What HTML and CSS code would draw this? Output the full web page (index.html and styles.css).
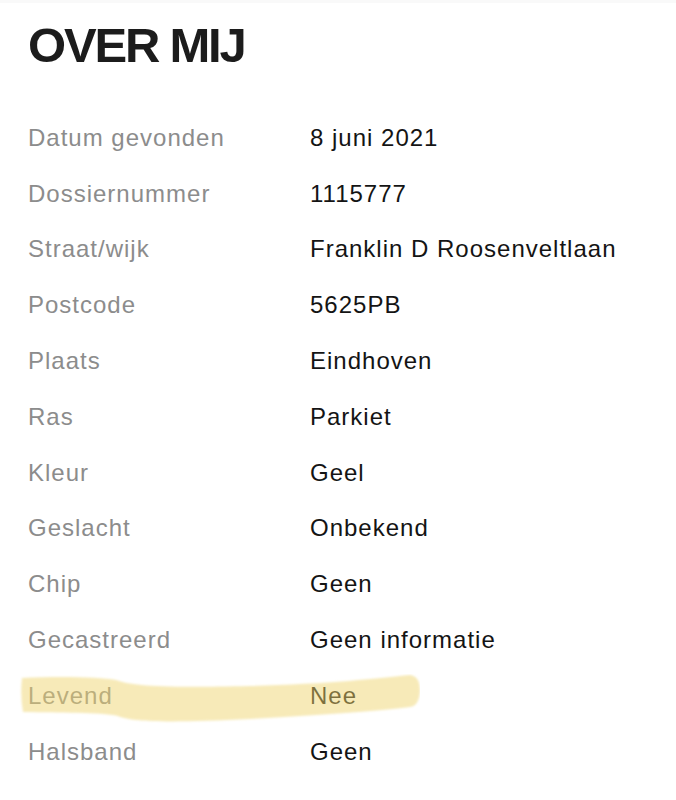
FILE: index.html
```html
<!DOCTYPE html>
<html lang="nl">
<head>
<meta charset="utf-8">
<title>Over mij</title>
<link rel="stylesheet" href="styles.css">
</head>
<body>
<main class="page">
  <h1 class="title">OVER MIJ</h1>
  <dl class="facts">
    <div class="row"><dt>Datum gevonden</dt><dd>8 juni 2021</dd></div>
    <div class="row"><dt>Dossiernummer</dt><dd>1115777</dd></div>
    <div class="row"><dt>Straat/wijk</dt><dd>Franklin D Roosenveltlaan</dd></div>
    <div class="row"><dt>Postcode</dt><dd>5625PB</dd></div>
    <div class="row"><dt>Plaats</dt><dd>Eindhoven</dd></div>
    <div class="row"><dt>Ras</dt><dd>Parkiet</dd></div>
    <div class="row"><dt>Kleur</dt><dd>Geel</dd></div>
    <div class="row"><dt>Geslacht</dt><dd>Onbekend</dd></div>
    <div class="row"><dt>Chip</dt><dd>Geen</dd></div>
    <div class="row"><dt>Gecastreerd</dt><dd>Geen informatie</dd></div>
    <div class="row row-marked"><dt>Levend</dt><dd>Nee</dd>
      <svg class="marker" viewBox="0 0 420 60" width="420" height="60" aria-hidden="true">
        <defs><filter id="soft" x="-5%" y="-30%" width="110%" height="160%"><feGaussianBlur stdDeviation="1.2"/></filter></defs>
        <path filter="url(#soft)" d="M22,4 C60,2 100,3 116,6 C132,12 160,14 250,12 C330,10 380,4 410,1 Q420,2 420,17 Q419,32 410,33 C380,37 320,41 250,45 C170,49 130,48 118,42 C100,38 60,39 23,38 Q20,21 22,4 Z"/>
      </svg>
    </div>
    <div class="row"><dt>Halsband</dt><dd>Geen</dd></div>
  </dl>
</main>
</body>
</html>
```

FILE: styles.css
```css
html, body {
  margin: 0;
  padding: 0;
  background: #ffffff;
}

body {
  font-family: "Liberation Sans", Arial, sans-serif;
  border-top: 3px solid #f9f9f9;
}

.page {
  padding: 17.5px 0 0 28px;
  position: relative;
}

.title {
  margin: 0 0 40.3px 0;
  font-size: 49px;
  line-height: 49px;
  font-weight: 700;
  letter-spacing: -2.2px;
  color: #1c1c1c;
}

.facts {
  margin: 0;
  padding: 0;
}

.row {
  display: grid;
  grid-template-columns: 282px auto;
  height: 55.8px;
  align-items: center;
  font-size: 24px;
  line-height: 55.8px;
  letter-spacing: 1px;
}

.row dt {
  margin: 0;
  color: #8c8c8c;
}

.row dd {
  margin: 0;
  color: #141414;
}

.row-marked {
  position: relative;
}

.marker {
  position: absolute;
  left: -28px;
  top: 6px;
  pointer-events: none;
}

.marker path {
  fill: #efd36a;
  fill-opacity: 0.48;
}
```
